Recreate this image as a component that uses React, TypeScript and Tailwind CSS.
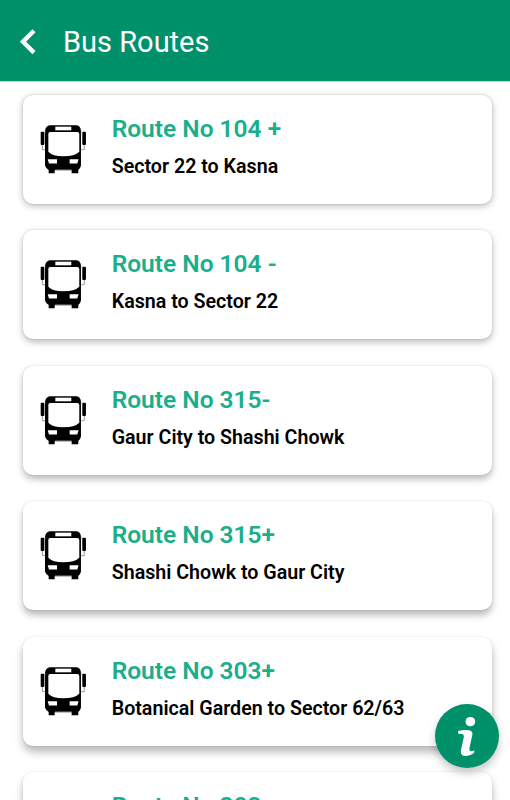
type Route = {
  name: string;
  path: string;
  shadow: string;
};

// the shadow gets heavier the further down the list a card sits
const routes: Route[] = [
  {
    name: "Route No 104 +",
    path: "Sector 22 to Kasna",
    shadow: "shadow-[0_2px_7px_rgba(0,0,0,0.28),0_0_2px_rgba(0,0,0,0.16)]",
  },
  {
    name: "Route No 104 -",
    path: "Kasna to Sector 22",
    shadow: "shadow-[0_3px_7px_rgba(0,0,0,0.28),0_0_2px_rgba(0,0,0,0.14)]",
  },
  {
    name: "Route No 315-",
    path: "Gaur City to Shashi Chowk",
    shadow: "shadow-[0_4px_7px_rgba(0,0,0,0.28),0_0_2px_rgba(0,0,0,0.12)]",
  },
  {
    name: "Route No 315+",
    path: "Shashi Chowk to Gaur City",
    shadow: "shadow-[0_5px_7px_rgba(0,0,0,0.28),0_0_2px_rgba(0,0,0,0.12)]",
  },
  {
    name: "Route No 303+",
    path: "Botanical Garden to Sector 62/63",
    shadow: "shadow-[0_6px_8px_rgba(0,0,0,0.28),0_0_2px_rgba(0,0,0,0.1)]",
  },
  {
    name: "Route No 303-",
    path: "Sector 62/63 to Botanical Garden",
    shadow: "shadow-[0_6px_8px_rgba(0,0,0,0.28),0_0_2px_rgba(0,0,0,0.1)]",
  },
];

function BusIcon() {
  return (
    <svg viewBox="30 44 142 146" className="h-[48.6px] w-[47.3px] shrink-0">
      <path
        d="M60 45H140Q152 47 153 61V166Q152 174 145 179V189H125V180H74V189H56V179Q47 174 45 166V61Q47 47 60 45Z"
        fill="#000"
      />
      <path d="M76 49H124V60H76Z" fill="#fff" />
      <path
        d="M60 65H142Q148 65 148 72V124Q134 138 100 138Q68 138 55 124V72Q55 65 60 65Z"
        fill="#fff"
      />
      <path d="M53 147H81V160H57ZM119 147H146L142 160H119Z" fill="#fff" />
      <path d="M75 179H125" stroke="#bbb" strokeWidth="2" />
      <rect x="32" y="64" width="11" height="40" rx="3" />
      <rect x="157" y="64" width="11" height="40" rx="3" />
      <path
        d="M43 65H47M152 65H157M37 104V118H45M163 104V118H154"
        fill="none"
        stroke="#999"
        strokeWidth="3"
      />
    </svg>
  );
}

function RouteCard({ route }: { route: Route }) {
  return (
    <div
      className={`flex h-[109px] shrink-0 items-start rounded-[10px] bg-white pl-[17px] ${route.shadow}`}
    >
      <div className="pt-[30.3px]">
        <BusIcon />
      </div>
      <div className="pt-[18px] pl-[24.4px] whitespace-nowrap">
        <h2 className="text-[24.5px] leading-[32px] font-semibold text-[#1bae8b]">
          {route.name}
        </h2>
        <p className="pt-[10px] text-[19.65px] leading-6 font-semibold text-black">
          {route.path}
        </p>
      </div>
    </div>
  );
}

export default function App() {
  return (
    <div className="relative flex h-[800px] w-[510px] flex-col overflow-hidden bg-white font-['Roboto',sans-serif]">
      <header className="flex h-[81px] shrink-0 items-center bg-[#00916a] pl-5 text-white shadow-[0_1px_0_rgba(0,0,0,0.2)]">
        <svg viewBox="0 0 16 26" className="mt-0.5 h-[26px] w-4" fill="none">
          <path d="M14 1.8L3 12.7L14 23.6" stroke="#fff" strokeWidth="4.4" />
        </svg>
        <h1 className="mt-[3px] ml-[27px] text-[29px] leading-9 font-normal">
          Bus Routes
        </h1>
      </header>
      <main className="flex flex-col gap-[26.5px] pt-[13.7px] pr-[18px] pl-[23px]">
        {routes.map((route) => (
          <RouteCard key={route.name} route={route} />
        ))}
      </main>
      <button
        aria-label="Info"
        className="absolute top-[704px] left-[435px] flex h-16 w-16 items-center justify-center rounded-full bg-[#00916a] shadow-[0_5px_9px_rgba(0,0,0,0.22)]"
      >
        <svg viewBox="115 78 53 122" className="h-[40.7px] w-[17.7px]">
          <ellipse cx="152" cy="95" rx="14.5" ry="14" fill="#fff" />
          <path
            d="M115 123Q135 118 148 121Q160 124 158 134L150 171Q147 184 154 184Q159 184 164 181L163 189Q151 198 137 198Q121 197 124 180L132 143Q134 132 127 132L116 131Z"
            fill="#fff"
          />
        </svg>
      </button>
    </div>
  );
}
